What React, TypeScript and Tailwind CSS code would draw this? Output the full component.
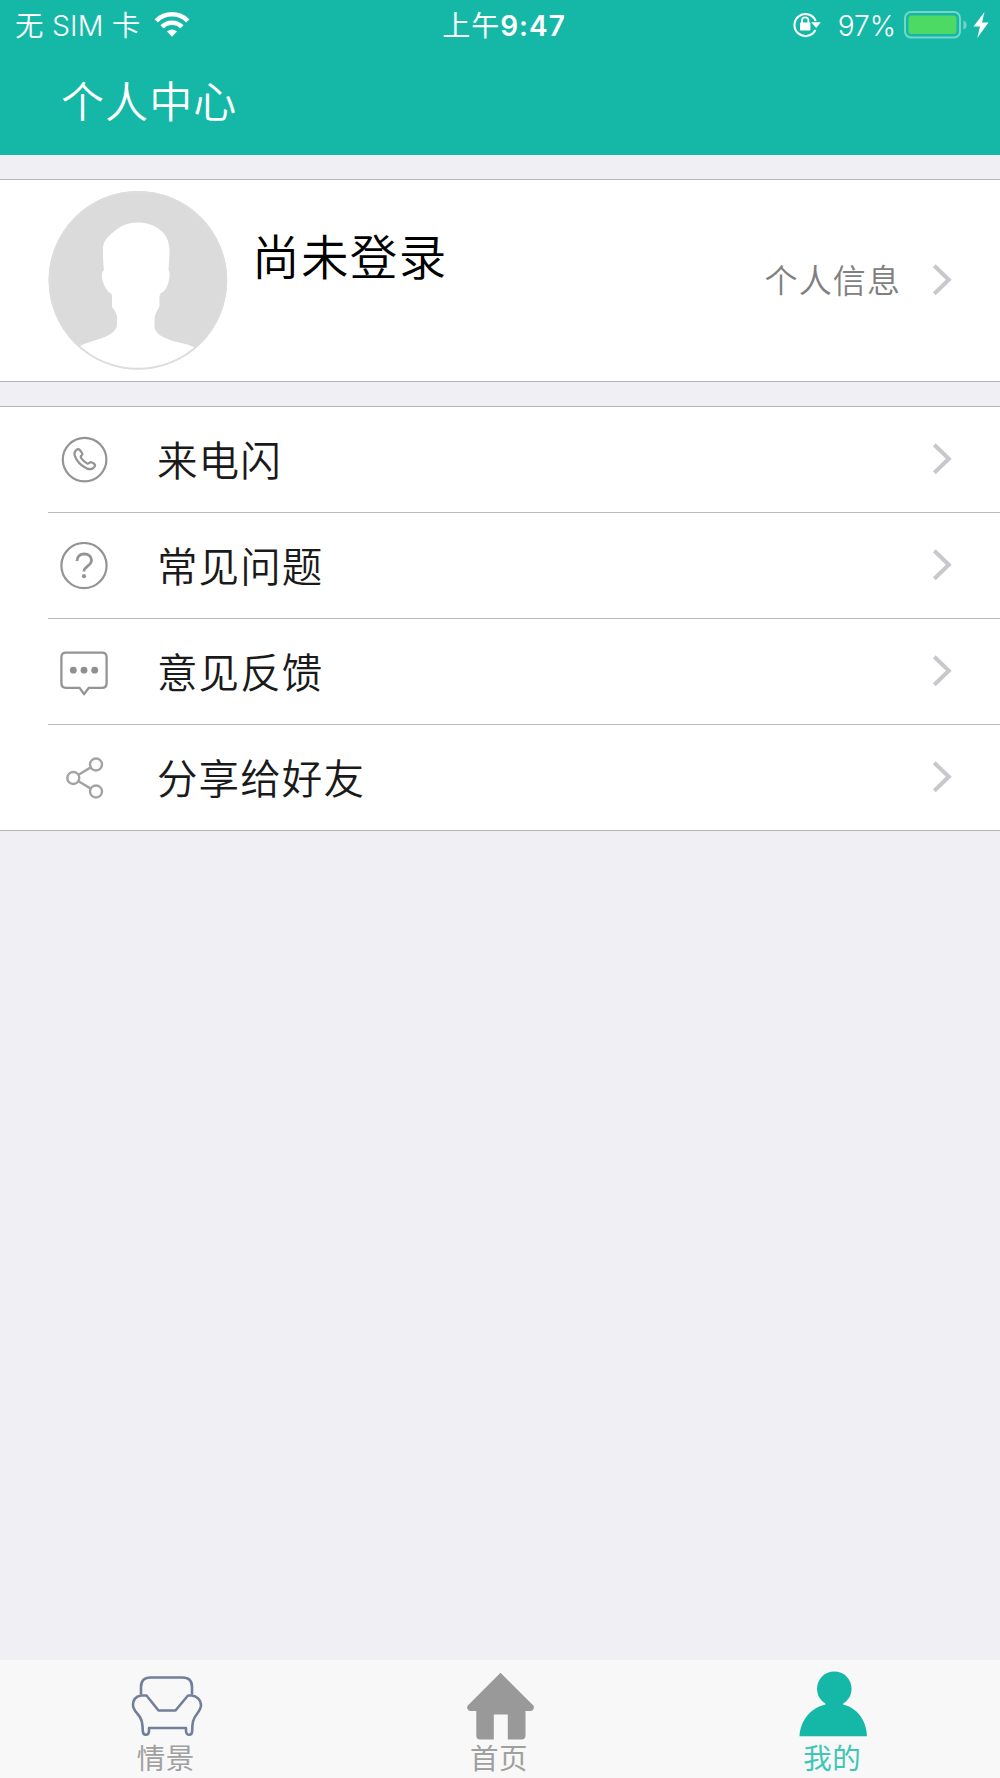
import type { ReactNode } from "react";

const menuItems = [
  { label: "来电闪", icon: <PhoneIcon /> },
  { label: "常见问题", icon: <QuestionIcon /> },
  { label: "意见反馈", icon: <MessageIcon /> },
  { label: "分享给好友", icon: <ShareIcon /> },
];

const tabs = [
  { label: "情景", icon: <SofaIcon />, active: false },
  { label: "首页", icon: <HomeIcon />, active: false },
  { label: "我的", icon: <PersonIcon />, active: true },
];

function PhoneIcon() {
  return (
    <svg width="48" height="48" viewBox="0 0 48 48" fill="none" stroke="#949494" strokeWidth="2.200">
      <circle cx="24.600" cy="23.600" r="21.800" />
      <path
        strokeLinejoin="round"
        d="M19.800 14L22.200 17.200Q22.800 18.400 21.400 19.600Q20.200 20.600 21.200 22.200Q23.600 25.600 27 27.400Q28.400 28 29.600 26.800Q30.800 25.600 32.200 26.600L34.400 28Q35.600 29 34.600 30.600Q32 34.400 27 32.600Q17.500 28.200 14.600 19.200Q13.800 16 16.400 13.800Q18.400 12.400 19.800 14Z"
      />
    </svg>
  );
}

function QuestionIcon() {
  return (
    <svg width="48" height="48" viewBox="0 0 48 48" fill="none" stroke="#949494" strokeWidth="2.200">
      <circle cx="24" cy="23.600" r="22.600" />
      <path strokeWidth="2.800" d="M17 19c0-4.500 3-7 7.300-7s7.200 2.600 7.200 6.200c0 5.800-7.600 6-7.600 11.400" />
      <circle cx="24" cy="34.200" r="2.100" fill="#949494" stroke="none" />
    </svg>
  );
}

function MessageIcon() {
  return (
    <svg width="48" height="48" viewBox="0 0 48 48" fill="none" stroke="#949494" strokeWidth="2.300">
      <path
        strokeLinejoin="round"
        d="M6 4.600h36q4.600 0 4.600 4.600v26q0 4.600-4.600 4.600H28.800L24 46.200L19.600 39.800H6q-4.600 0-4.600-4.600v-26q0-4.600 4.600-4.600z"
      />
      <g fill="#8f8f8f" stroke="none">
        <circle cx="13.300" cy="22.200" r="3.400" />
        <circle cx="24" cy="22.200" r="3.400" />
        <circle cx="34.700" cy="22.200" r="3.400" />
      </g>
    </svg>
  );
}

function ShareIcon() {
  return (
    <svg width="48" height="48" viewBox="0 0 48 48" fill="none" stroke="#a3a3a3" strokeWidth="2.400">
      <circle cx="13.300" cy="24" r="6" />
      <circle cx="36" cy="10.500" r="6" />
      <circle cx="36" cy="37.500" r="6" />
      <path d="M18.500 20.800L30.800 13.400M18.500 27.200L30.800 34.600" />
    </svg>
  );
}

function SofaIcon() {
  return (
    <svg width="72" height="70" viewBox="0 0 72 70" fill="none" stroke="#727f9b" strokeWidth="2.600" strokeLinejoin="round">
      <path d="M10 24.500V17q0-9.500 9.500-9.500h32q9.500 0 9.500 9.500v7.500" />
      <path d="M10 25.500h5.500L27.500 40.500h17L57 25.500h4c5.500 1 9 5 9 9.500 0 7-6.500 9-8 16.500-.8 4-.8 5-.8 9.500 0 5-6.200 5-6.200 0v-3H18v3c0 5-6.200 5-6.200 0 0-4.500-.2-5.500-1-9.500C9.300 44 2 42 2 35c0-4.500 2.500-8.500 8-9.500z" />
    </svg>
  );
}

function HomeIcon() {
  return (
    <svg width="72" height="70" viewBox="0 0 72 70" fill="#999999">
      <path d="M36.500 2.800L69.300 35.500Q70.500 37 69.500 39Q68.500 41 66.500 41H61.500V65.500Q61.500 69.500 57.500 69.500H43.800V44.500H29.800V69.500H16Q12.300 69.500 12.300 65.500V41H6.500Q4.500 41 3.500 39Q2.500 37 3.800 35.500Z" />
    </svg>
  );
}

function PersonIcon() {
  return (
    <svg width="72" height="70" viewBox="0 0 72 70" fill="#15b8a6">
      <circle cx="37.300" cy="18.800" r="17.300" />
      <path d="M2.500 66.300C3.500 49 15 37.500 28.500 34.500Q29 32 27 30H47Q45 32 46 34.500C59 37.500 69.500 49 70 66.300Z" />
    </svg>
  );
}

function Chevron() {
  return (
    <svg className="relative -top-px" width="20" height="32" viewBox="0 0 20 32" fill="none" stroke="#c7c7cc" strokeWidth="4">
      <path d="M2.300 1.800L16.800 15.800L2.300 29.800" />
    </svg>
  );
}

function Avatar() {
  return (
    <svg className="relative -top-px" width="180" height="180" viewBox="0 0 180 180">
      <circle cx="89.900" cy="90.300" r="89.300" fill="#dbdbdb" />
      <path
        fill="#fff"
        d="M89.500 32.500C107.500 32.500 121.500 43 121.500 60C121.500 68 121 74 120.500 80Q122.500 82 121 90Q119.500 98 115 102Q111.500 103 111.500 107V116Q110.500 119 108.500 122Q106.500 125 106.500 130V136C106.500 144 115.500 147.500 123.500 150.500C132.500 153.500 141 154 147 157.600A87.500 87.500 0 0 1 31.500 156.300C39.500 152 47.500 150.500 55.500 147.500C63.500 144.500 69 140 69 134V126Q67.500 121 64 117V106Q64 103 60.500 102Q55.500 96 54 88Q53.500 82 56 80C55 72 55 66 55 59C55 51 59.500 47 65.500 42C72.500 36 79.500 32.500 89.500 32.500Z"
      />
      <circle cx="89.900" cy="90.300" r="88.400" fill="none" stroke="#dddddd" strokeWidth="1.800" />
    </svg>
  );
}

function StatusBar() {
  return (
    <div className="grid h-[50px] grid-cols-[1fr_auto_1fr] items-center pr-[11px] pl-[15px] text-[28px] leading-none text-white">
      <div className="flex items-center font-[350]">
        <span className="relative top-px text-[28.500px] tracking-[0.200px] whitespace-pre">无 SIM 卡</span>
        <svg className="ml-[13px]" width="36" height="26" viewBox="0 0 36 26">
          <g fill="none" stroke="#fff" strokeWidth="4.600">
            <path d="M2.200 8.800a22.500 22.500 0 0 1 31.600 0" />
            <path d="M8 14.800a14.200 14.200 0 0 1 20 0" />
          </g>
          <path d="M18 24.800l-5-5.300q5-4.200 10 0z" fill="#fff" />
        </svg>
      </div>
      <span className="relative top-px left-[2px] tracking-[1px]">
        上午<span className="font-semibold">9:47</span>
      </span>
      <div className="flex items-center justify-end">
        <svg width="28" height="26" viewBox="0 0 28 26">
          <path d="M22.300 18A11 11 0 1 1 22.700 9" fill="none" stroke="#fff" strokeWidth="2.100" />
          <path d="M18.200 10.300h9.600l-4.600 5.800z" fill="#fff" />
          <rect x="7" y="10.500" width="10.400" height="8" rx="1" fill="#fff" />
          <path d="M9 11.500V8.500a3.200 3.200 0 0 1 6.400 0v3" fill="none" stroke="#fff" strokeWidth="1.800" />
        </svg>
        <span className="relative top-px ml-[17px] font-[350]">97%</span>
        <svg className="ml-[8px]" width="63" height="28" viewBox="0 0 63 28">
          <rect x="1" y="1" width="55" height="25.500" rx="6" fill="none" stroke="#fff" strokeOpacity=".42" strokeWidth="2" />
          <rect x="4.500" y="4.500" width="48" height="18.500" rx="3" fill="#4cd964" />
          <path d="M59.500 9.500q3 1 3 4.500t-3 4.500z" fill="#fff" fillOpacity=".42" />
        </svg>
        <svg className="ml-[6px]" width="16" height="26" viewBox="0 0 16 26" fill="#fff">
          <path d="M11.500 0L.5 14.500H7L4.300 26L15.500 10.500H9z" />
        </svg>
      </div>
    </div>
  );
}

function MenuRow({ icon, label, last }: { icon: ReactNode; label: string; last: boolean }) {
  return (
    <button className="flex w-full items-center bg-white pl-[48px] text-left">
      <span
        className={
          last
            ? "flex h-[105px] flex-1 items-center pr-[48px] pl-3"
            : "flex h-[106px] flex-1 items-center border-b border-[#bcbcc0] pr-[48px] pl-3"
        }
      >
        {icon}
        <span className="ml-[49px] flex-1 pt-[5px] text-[40.500px] leading-none font-[350] tracking-[1.100px] text-[#1a1a1a]">
          {label}
        </span>
        <Chevron />
      </span>
    </button>
  );
}

export default function App() {
  return (
    <div className="flex h-[1778px] w-[1000px] flex-col overflow-hidden bg-[#efeff4] font-['Inter','Noto_Sans_CJK_SC',sans-serif]">
      <header className="h-[154.500px] bg-[#15b8a6]">
        <StatusBar />
        <h1 className="pt-[31px] pl-[61px] text-[43px] leading-none font-[350] tracking-[1.100px] text-white">个人中心</h1>
      </header>

      <section className="mt-[24.500px] flex h-[203px] items-center border-y border-[#b5b5b9] bg-white pr-[48px] pl-[48px]">
        <Avatar />
        <div className="ml-[24px] flex-1 self-start pt-[54px] text-[47.500px] leading-none font-[350] tracking-[1.400px] text-black">
          尚未登录
        </div>
        <span className="mr-[31px] pt-[2px] text-[33px] leading-none font-[350] tracking-[1.100px] text-[#808080]">个人信息</span>
        <Chevron />
      </section>

      <nav className="mt-[24px] border-y border-[#b5b5b9] bg-white">
        {menuItems.map((item, i) => (
          <MenuRow key={item.label} {...item} last={i === menuItems.length - 1} />
        ))}
      </nav>

      <footer className="mt-auto grid h-[118.500px] grid-cols-3 bg-[#f8f8f8]">
        {tabs.map(tab => (
          <button key={tab.label} className="flex flex-col items-center pt-[10px]">
            {tab.icon}
            <span
              className={
                tab.active
                  ? "mt-[5px] pr-[2px] text-[28.500px] leading-none tracking-[0.500px] text-[#3fc6b6]"
                  : "mt-[5px] pr-[2px] text-[28.500px] leading-none tracking-[0.500px] text-[#a0a0a0]"
              }
            >
              {tab.label}
            </span>
          </button>
        ))}
      </footer>
    </div>
  );
}
